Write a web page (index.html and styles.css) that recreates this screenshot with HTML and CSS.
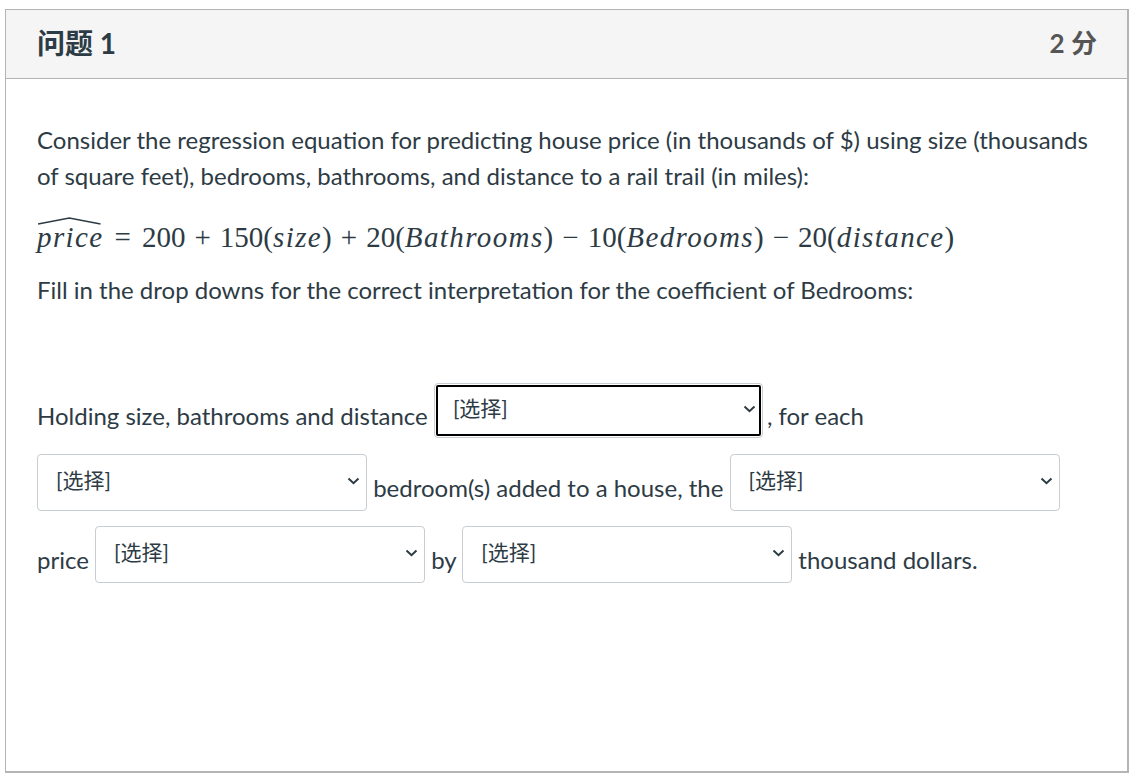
FILE: index.html
```html
<!DOCTYPE html>
<html lang="zh">
<head>
<meta charset="utf-8">
<title>问题 1</title>
<link rel="stylesheet" href="styles.css">
</head>
<body>
<div class="card">
  <div class="card-header">
    <h2 class="q-title">问题 1</h2>
    <span class="q-points">2 分</span>
  </div>
  <div class="card-body">
    <p class="para">Consider the regression equation for predicting house price (in thousands of $) using size (thousands of square feet), bedrooms, bathrooms, and distance to a rail trail (in miles):</p>
    <p class="math"><span class="hat"><span class="mi">price</span><svg class="hat-svg" viewBox="0 0 60 8" preserveAspectRatio="none"><path d="M1 7 L30 1 L59 7" fill="none" stroke="#2d3b45" stroke-width="1.3"/></svg></span><span class="op">=</span><span class="mn">200</span><span class="bin">+</span><span class="mn">150</span>(<span class="mi">size</span>)<span class="bin">+</span><span class="mn">20</span>(<span class="mi">Bathrooms</span>)<span class="bin">−</span><span class="mn">10</span>(<span class="mi">Bedrooms</span>)<span class="bin">−</span><span class="mn">20</span>(<span class="mi">distance</span>)</p>
    <p class="para">Fill in the drop downs for the correct interpretation for the coefficient of Bedrooms:</p>
    <p class="fill">Holding size, bathrooms and distance <span class="sel-wrap focus-wrap"><select class="sel focused"><option>[选择]</option></select><svg class="chev" viewBox="0 0 13 8"><path d="M1.5 1.5 L6.5 6.2 L11.5 1.5" fill="none" stroke="#2d3b45" stroke-width="2"/></svg></span>, for each <span class="sel-wrap"><select class="sel"><option>[选择]</option></select><svg class="chev" viewBox="0 0 13 8"><path d="M1.5 1.5 L6.5 6.2 L11.5 1.5" fill="none" stroke="#2d3b45" stroke-width="2"/></svg></span> bedroom(s) added to a house, the <span class="sel-wrap"><select class="sel"><option>[选择]</option></select><svg class="chev" viewBox="0 0 13 8"><path d="M1.5 1.5 L6.5 6.2 L11.5 1.5" fill="none" stroke="#2d3b45" stroke-width="2"/></svg></span> price <span class="sel-wrap"><select class="sel"><option>[选择]</option></select><svg class="chev" viewBox="0 0 13 8"><path d="M1.5 1.5 L6.5 6.2 L11.5 1.5" fill="none" stroke="#2d3b45" stroke-width="2"/></svg></span> by <span class="sel-wrap"><select class="sel"><option>[选择]</option></select><svg class="chev" viewBox="0 0 13 8"><path d="M1.5 1.5 L6.5 6.2 L11.5 1.5" fill="none" stroke="#2d3b45" stroke-width="2"/></svg></span> thousand dollars.</p>
  </div>
</div>
</body>
</html>
```
FILE: styles.css
```css
html, body {
  margin: 0;
  padding: 0;
  background: #ffffff;
}
body {
  font-family: "Lato", "Noto Sans CJK SC", sans-serif;
  color: #2d3b45;
}
.card {
  margin: 9px 0 0 5px;
  width: 1124px;
  height: 764px;
  box-sizing: border-box;
  border: 1px solid #b4b4b4;
  border-bottom-width: 2px;
  border-right-width: 2px;
}
.card-header {
  display: flex;
  justify-content: space-between;
  align-items: center;
  height: 69px;
  box-sizing: border-box;
  padding: 0 30px 5px 31px;
  background: #f5f5f5;
  border-bottom: 1px solid #b4b4b4;
}
.q-title {
  margin: 0;
  font-size: 28px;
  font-weight: 700;
  color: #2d3b45;
  font-family: "Lato", "Noto Sans CJK SC", sans-serif;
}
.q-points {
  font-size: 26px;
  font-weight: 700;
  color: #555555;
  font-family: "Lato", "Noto Sans CJK SC", sans-serif;
}
.card-body {
  padding: 43px 31px 0 31px;
}
.para {
  margin: 0;
  font-size: 24px;
  line-height: 36px;
}
.math {
  margin: 23px 0 15px 0;
  font-family: "Liberation Serif", "Times New Roman", serif;
  font-size: 29px;
  line-height: 40px;
  white-space: nowrap;
  color: #2d3b45;
}
.mi {
  font-style: italic;
  letter-spacing: 1.4px;
}
.op {
  padding: 0 11px;
}
.bin {
  padding: 0 9px;
}
.hat {
  position: relative;
  display: inline-block;
}
.hat-svg {
  position: absolute;
  left: 0;
  top: 0;
  width: calc(100% - 2px);
  height: 8px;
}
.fill {
  margin: 72px 0 0 0;
  font-size: 24px;
  line-height: 72px;
}
.sel-wrap {
  position: relative;
  display: inline-block;
  vertical-align: middle;
  margin-top: -16px;
}
.focus-wrap {
  margin-right: 4px;
}
.sel {
  appearance: none;
  -webkit-appearance: none;
  display: block;
  width: 330px;
  height: 57px;
  box-sizing: border-box;
  border: 1px solid #c7cdd1;
  border-radius: 4px;
  background: #ffffff;
  padding: 0 36px 6px 18px;
  font-family: "Lato", "Noto Sans CJK SC", sans-serif;
  font-size: 21px;
  color: #2d3b45;
}
.sel.focused {
  width: 329px;
  height: 55px;
  outline: 2px solid #000000;
  outline-offset: -4px;
}
.chev {
  position: absolute;
  right: 7px;
  top: 50%;
  width: 13px;
  height: 8px;
  margin-top: -6px;
}
```
